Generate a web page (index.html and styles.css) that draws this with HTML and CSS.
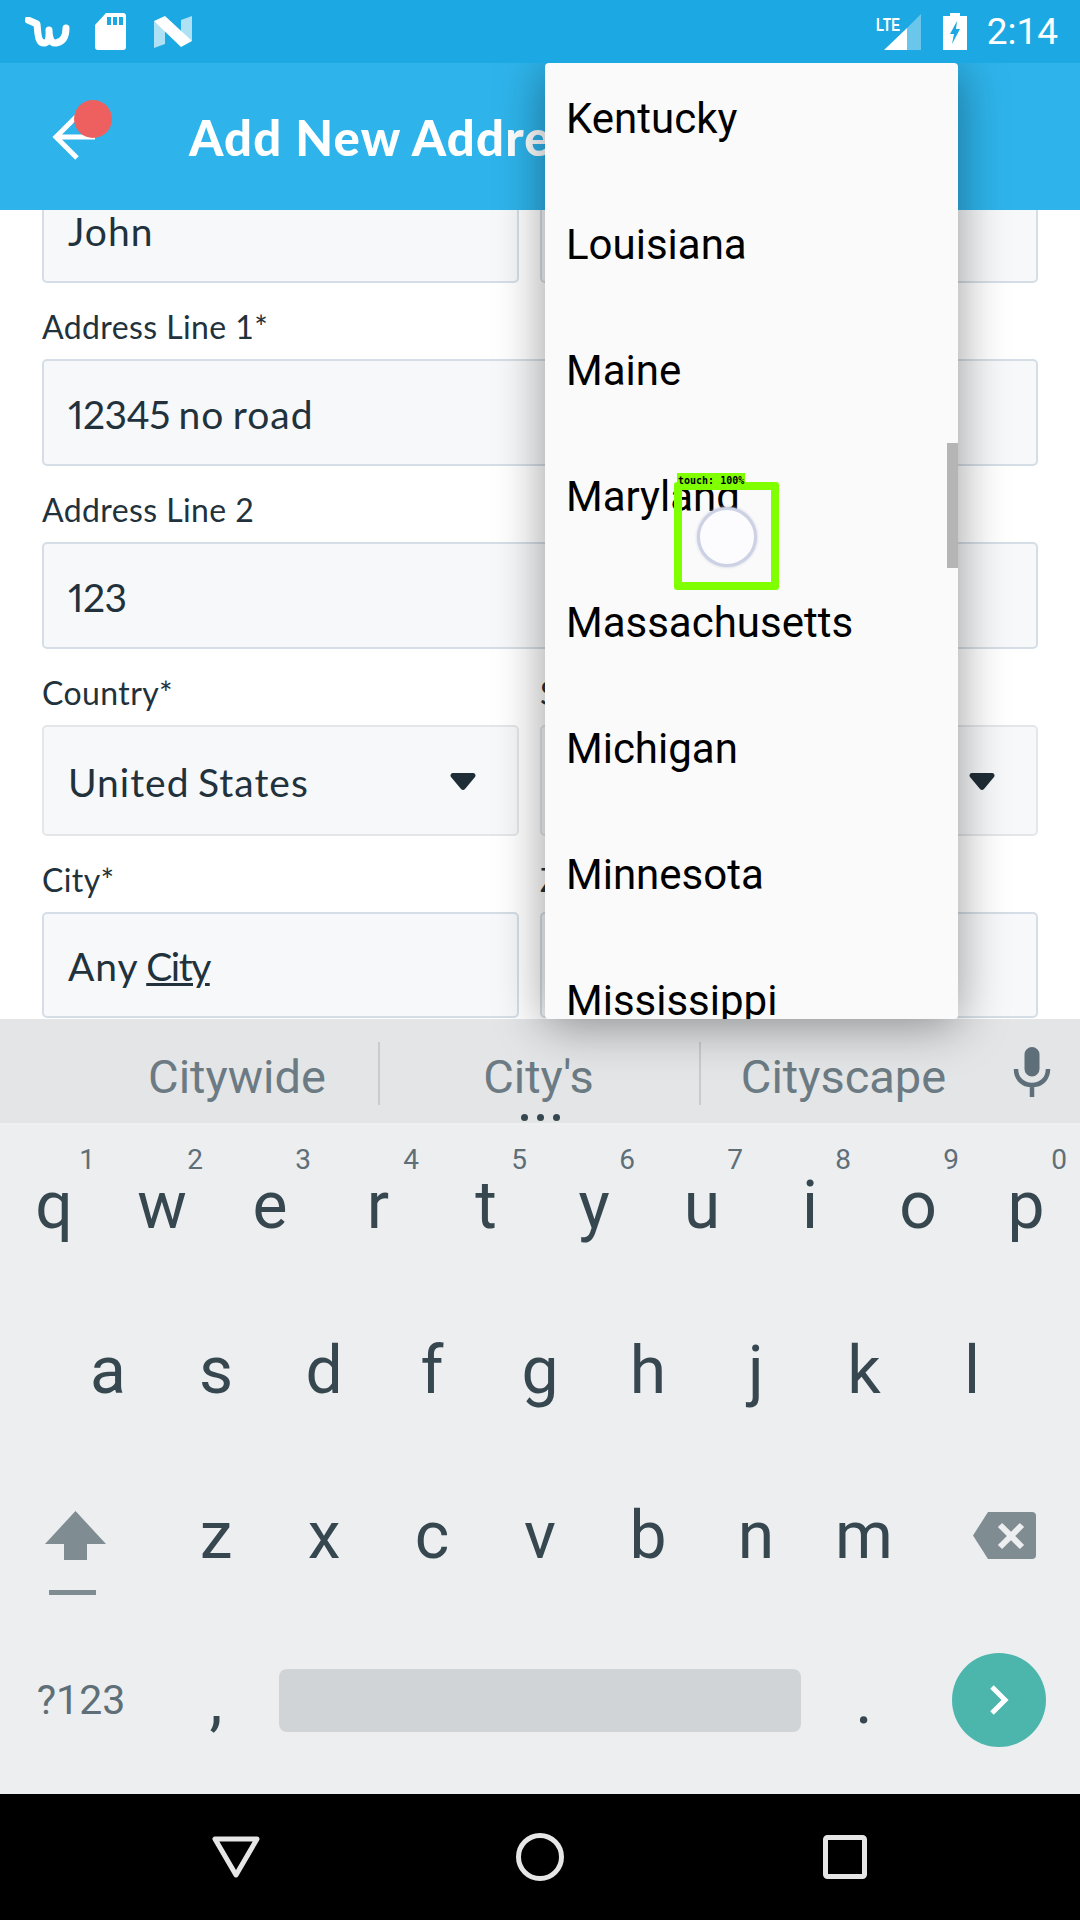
FILE: index.html
```html
<!DOCTYPE html>
<html lang="en">

<head>
    <meta charset="UTF-8">
    <meta name="viewport" content="width=device-width, initial-scale=1.0">
    <title>Add New Address</title>
    <link rel="stylesheet" href="styles.css">
</head>

<body>
    <div class="screen">
        <div class="status-bar">
            <svg class="ic-wish" viewBox="0 0 45 30">
                <path d="M3 3 L12 7 C13 18 13 27 20 26 C25 25 24 16 24 13 C24 18 25 27 31 26 C38 25 41 19 41 11" fill="none" stroke="#fff" stroke-width="7" stroke-linecap="round" stroke-linejoin="round" />
            </svg>
            <svg class="ic-sd" viewBox="0 0 31 37">
                <path d="M11 0 H28 a3 3 0 0 1 3 3 V34 a3 3 0 0 1 -3 3 H3 a3 3 0 0 1 -3 -3 V12 Z" fill="#fff" />
                <path d="M12 4 h4 v8 h-4 z M18 4 h4 v8 h-4 z M24 4 h4 v8 h-4 z" fill="#1ca8e2" />
            </svg>
            <svg class="ic-n" viewBox="0 0 38 32">
                <path d="M0 5 L11 12 V28 L0 32 Z M38 0 V25 L27 20 V4 Z" fill="#fff" opacity="0.65" />
                <path d="M0 5 L11 0 L38 25 L27 31 Z" fill="#fff" />
            </svg>
            <div class="status-right">
                <svg class="ic-signal" viewBox="0 0 45 36">
                    <path d="M45 0 V36 H31 V14 Z" fill="#fff" opacity="0.35" />
                    <path d="M31 14 V36 H8 Z" fill="#fff" />
                    <text x="0" y="17" class="lte" textLength="24" lengthAdjust="spacingAndGlyphs">LTE</text>
                </svg>
                <svg class="ic-battery" viewBox="0 0 24 37">
                    <path d="M7 0 H17 V3 H24 V37 H0 V3 H7 Z" fill="#fff" />
                    <path d="M14 8 L7 21 H11 L9 31 L17 16 H13 Z" fill="#1ca8e2" />
                </svg>
                <span class="clock">2:14</span>
            </div>
        </div>

        <div class="app-bar">
            <svg class="ic-back" viewBox="0 0 45 48">
                <path d="M25 3 L4 24 L25 45 M4 24 H43" fill="none" stroke="#fff" stroke-width="5" />
            </svg>
            <h1 class="title">Add New Address</h1>
        </div>

        <div class="form">
            <div class="form-grid">
                <div class="field">
                    <div class="input"><span>John</span></div>
                </div>
                <div class="field">
                    <div class="input"></div>
                </div>
                <div class="field wide">
                    <div class="label">Address Line 1*</div>
                    <div class="input"><span><span class="digits">12345</span> no road</span></div>
                </div>
                <div class="field wide">
                    <div class="label">Address Line 2</div>
                    <div class="input"><span class="digits">123</span></div>
                </div>
                <div class="field">
                    <div class="label">Country*</div>
                    <div class="input select">
                        <span>United States</span>
                        <svg class="caret" viewBox="0 0 26 17">
                            <path d="M3 0 H23 a2.500 2.500 0 0 1 2 4 L15 16 a3 3 0 0 1 -4 0 L1 4 a2.500 2.500 0 0 1 2 -4 Z" fill="#1f2d36" />
                        </svg>
                    </div>
                </div>
                <div class="field">
                    <div class="label">State*</div>
                    <div class="input select">
                        <svg class="caret" viewBox="0 0 26 17">
                            <path d="M3 0 H23 a2.500 2.500 0 0 1 2 4 L15 16 a3 3 0 0 1 -4 0 L1 4 a2.500 2.500 0 0 1 2 -4 Z" fill="#1f2d36" />
                        </svg>
                    </div>
                </div>
                <div class="field">
                    <div class="label">City*</div>
                    <div class="input short"><span>Any <u class="composing">City</u></span></div>
                </div>
                <div class="field">
                    <div class="label">Zip*</div>
                    <div class="input short"></div>
                </div>
            </div>
        </div>

        <div class="keyboard">
            <div class="suggestions">
                <span class="suggestion">Citywide</span>
                <span class="suggestion divided">City's</span>
                <span class="suggestion divided">Cityscape</span>
                <svg class="ic-mic" viewBox="0 0 38 50">
                    <path d="M19 0 a7.500 7.500 0 0 1 7.500 7.500 V22 a7.500 7.500 0 0 1 -15 0 V7.500 A7.500 7.500 0 0 1 19 0 Z" fill="#5f6f7a" />
                    <path d="M3 22 C3 32 10 38 19 38 C28 38 35 32 35 22 M19 38 V50" fill="none" stroke="#5f6f7a" stroke-width="4.500" />
                </svg>
                <div class="more-dots"><i></i><i></i><i></i></div>
            </div>
            <div class="keys">
                <div class="key-row">
                    <div class="key">q<sup class="hint">1</sup></div>
                    <div class="key">w<sup class="hint">2</sup></div>
                    <div class="key">e<sup class="hint">3</sup></div>
                    <div class="key">r<sup class="hint">4</sup></div>
                    <div class="key">t<sup class="hint">5</sup></div>
                    <div class="key">y<sup class="hint">6</sup></div>
                    <div class="key">u<sup class="hint">7</sup></div>
                    <div class="key">i<sup class="hint">8</sup></div>
                    <div class="key">o<sup class="hint">9</sup></div>
                    <div class="key">p<sup class="hint">0</sup></div>
                </div>
                <div class="key-row">
                    <div class="key">a</div>
                    <div class="key">s</div>
                    <div class="key">d</div>
                    <div class="key">f</div>
                    <div class="key">g</div>
                    <div class="key">h</div>
                    <div class="key">j</div>
                    <div class="key">k</div>
                    <div class="key">l</div>
                </div>
                <div class="key-row">
                    <div class="key side">
                        <svg class="ic-shift" viewBox="0 0 61 84">
                            <path d="M30.500 0 L61 33 H42 V49 H19 V33 H0 Z M4 79 H51 V84 H4 Z" fill="#7f8c92" />
                        </svg>
                    </div>
                    <div class="key">z</div>
                    <div class="key">x</div>
                    <div class="key">c</div>
                    <div class="key">v</div>
                    <div class="key">b</div>
                    <div class="key">n</div>
                    <div class="key">m</div>
                    <div class="key side">
                        <svg class="ic-del" viewBox="0 0 63 47">
                            <path d="M15 0 H59 a4 4 0 0 1 4 4 V43 a4 4 0 0 1 -4 4 H15 L0 23.500 Z" fill="#7f8c92" />
                            <path d="M27 13 L49 35 M49 13 L27 35" stroke="#eceef0" stroke-width="6" />
                        </svg>
                    </div>
                </div>
                <div class="key-row bottom-row">
                    <div class="key side symbols">?123</div>
                    <div class="key punct">,</div>
                    <div class="space-key"><div class="space-bar"></div></div>
                    <div class="key punct">.</div>
                    <div class="key side">
                        <div class="enter">
                            <svg class="ic-next" viewBox="0 0 20 32">
                                <path d="M3 3 L16 16 L3 29" fill="none" stroke="#fff" stroke-width="5" />
                            </svg>
                        </div>
                    </div>
                </div>
            </div>
        </div>

        <div class="nav-bar">
            <svg class="ic-nav-back" viewBox="0 0 48 42">
                <path d="M3 3 H45 L24 39 Z" fill="none" stroke="#e6e6e6" stroke-width="5" stroke-linejoin="round" />
            </svg>
            <svg class="ic-nav-home" viewBox="0 0 48 48">
                <circle cx="24" cy="24" r="21.500" fill="none" stroke="#e6e6e6" stroke-width="5" />
            </svg>
            <svg class="ic-nav-recent" viewBox="0 0 44 44">
                <rect x="2.500" y="2.500" width="39" height="39" rx="2" fill="none" stroke="#e6e6e6" stroke-width="5" />
            </svg>
        </div>

        <div class="back-badge"></div>

        <div class="dropdown">
            <div class="dropdown-list">
                <div class="dropdown-item">Kentucky</div>
                <div class="dropdown-item">Louisiana</div>
                <div class="dropdown-item">Maine</div>
                <div class="dropdown-item">Maryland</div>
                <div class="dropdown-item">Massachusetts</div>
                <div class="dropdown-item">Michigan</div>
                <div class="dropdown-item">Minnesota</div>
                <div class="dropdown-item">Mississippi</div>
            </div>
            <div class="scroll-thumb"></div>
        </div>

        <div class="touch-ring"></div>
        <div class="touch-box"><span class="touch-label">touch: 100%</span></div>
    </div>
</body>

</html>
```

FILE: styles.css
```css
* {
    box-sizing: border-box;
}

body {
    margin: 0;
    background: #fff;
    font-family: Lato, sans-serif;
}

.screen {
    position: relative;
    display: flex;
    flex-direction: column;
    width: 1080px;
    height: 1920px;
    overflow: hidden;
}

/* status bar */
.status-bar {
    position: relative;
    z-index: 3;
    display: flex;
    align-items: center;
    flex: 0 0 63px;
    padding-left: 25px;
    background: #1ca8e2;
}

.ic-wish {
    width: 45px;
    height: 30px;
}

.ic-sd {
    width: 31px;
    height: 37px;
    margin-left: 25px;
}

.ic-n {
    width: 38px;
    height: 32px;
    margin-left: 28px;
}

.status-right {
    display: flex;
    align-items: center;
    margin-left: auto;
    padding-right: 22px;
}

.ic-signal {
    width: 45px;
    height: 36px;
    overflow: visible;
}

.lte {
    fill: #fff;
    font-family: "Liberation Sans", sans-serif;
    font-size: 19px;
    font-weight: 700;
}

.ic-battery {
    width: 24px;
    height: 37px;
    margin-left: 22px;
}

.clock {
    margin-left: 20px;
    color: #fff;
    font-family: Roboto, sans-serif;
    font-size: 37px;
}

/* app bar */
.app-bar {
    position: relative;
    z-index: 1;
    display: flex;
    align-items: center;
    flex: 0 0 147px;
    padding-left: 52px;
    background: #2eb4eb;
}

.ic-back {
    width: 45px;
    height: 48px;
}

.title {
    margin: 0 0 0 92px;
    color: #fff;
    font-size: 49px;
    font-weight: 900;
    letter-spacing: 1.200px;
    white-space: nowrap;
}

.back-badge {
    position: absolute;
    top: 100px;
    left: 74px;
    z-index: 2;
    width: 38px;
    height: 38px;
    border-radius: 50%;
    background: #ee6060;
}

/* form */
.form {
    flex: 1;
    min-height: 0;
    overflow: hidden;
    background: #fff;
}

.form-grid {
    display: grid;
    grid-template-columns: 477px 498px;
    column-gap: 21px;
    margin-top: -34px;
    padding-left: 42px;
}

.wide {
    grid-column: 1 / 3;
}

.label {
    height: 76px;
    padding-top: 24px;
    color: #22323c;
    font-size: 32px;
    letter-spacing: 0.400px;
    line-height: 40px;
}

.input {
    display: flex;
    align-items: center;
    height: 107px;
    padding: 2px 24px 0;
    border: 2px solid #d5dee6;
    border-radius: 5px;
    background: #f6f8fa;
    color: #22323c;
    font-size: 39px;
    letter-spacing: 1px;
    word-spacing: -2.500px;
}

.digits {
    font-variant-numeric: proportional-nums;
    letter-spacing: -0.500px;
}

.composing {
    letter-spacing: -1.500px;
}

.select {
    height: 111px;
    border-color: #e3e7ea;
}

.short {
    height: 106px;
}

.caret {
    width: 26px;
    height: 17px;
    margin: 0 17px 0 auto;
}

/* dropdown */
.dropdown {
    position: absolute;
    top: 63px;
    left: 545px;
    z-index: 2;
    width: 413px;
    height: 956px;
    overflow: hidden;
    border-radius: 4px;
    background: #fafafa;
    box-shadow: 0 6px 50px rgba(0, 0, 0, 0.4);
}

.dropdown-list {
    margin-top: -8px;
}

.dropdown-item {
    display: flex;
    align-items: center;
    height: 126px;
    padding-left: 21px;
    color: #000;
    font-family: Roboto, sans-serif;
    font-size: 42px;
}

.scroll-thumb {
    position: absolute;
    top: 380px;
    right: 0;
    width: 11px;
    height: 125px;
    background: #b5b5b5;
}

/* touch marker */
.touch-ring {
    position: absolute;
    top: 507px;
    left: 697px;
    z-index: 3;
    width: 60px;
    height: 60px;
    border: 3px solid #cdd1e4;
    border-radius: 50%;
    background: #fcfcfe;
    box-shadow: 0 0 3px #c6cbe0;
}

.touch-box {
    position: absolute;
    top: 482px;
    left: 674px;
    z-index: 3;
    width: 105px;
    height: 108px;
    border: 8px solid #7fff00;
    border-radius: 3px;
}

.touch-label {
    position: absolute;
    top: -17px;
    left: -5px;
    padding: 0 1px;
    background: #7fff00;
    color: #000;
    font-family: "DejaVu Sans Mono", monospace;
    font-size: 10px;
    font-weight: 700;
    line-height: 16px;
    white-space: nowrap;
}

/* keyboard */
.keyboard {
    flex: 0 0 775px;
    background: #eceef0;
}

.suggestions {
    position: relative;
    display: flex;
    align-items: center;
    height: 106px;
    border-bottom: 2px solid #eef0f1;
    background: #e3e5e7;
    color: #6c7b83;
    font-family: Roboto, sans-serif;
    font-size: 47px;
}

.suggestion {
    position: relative;
    flex: 0 0 320px;
    margin-top: 10px;
    text-align: center;
}

.suggestion:first-child {
    flex-basis: 378px;
    padding-left: 96px;
}

.divided {
    flex-basis: 321px;
}

.suggestion:last-of-type {
    padding-right: 32px;
}

.divided::before {
    content: "";
    position: absolute;
    top: -7px;
    left: 0;
    width: 2px;
    height: 63px;
    background: #c8ccce;
}

.ic-mic {
    width: 38px;
    height: 50px;
    margin: 2px 0 0 -7px;
}

.more-dots {
    position: absolute;
    bottom: 2px;
    left: 521px;
    display: flex;
    gap: 9px;
}

.more-dots i {
    width: 7px;
    height: 7px;
    border-radius: 50%;
    background: #37474f;
}

.keys {
    padding-top: 7px;
}

.key-row {
    display: flex;
    justify-content: center;
    height: 165px;
}

.key {
    position: relative;
    display: flex;
    align-items: center;
    justify-content: center;
    flex: 0 0 108px;
    padding-bottom: 19px;
    color: #37474f;
    font-family: Roboto, sans-serif;
    font-size: 66px;
}

.hint {
    position: absolute;
    top: 10px;
    right: 13px;
    color: #5f6f78;
    font-size: 28px;
    line-height: 36px;
}

.side {
    flex-basis: 162px;
    padding-bottom: 0;
}

.symbols {
    color: #5f6f78;
    font-size: 41px;
}

.punct {
    padding-bottom: 0;
}

.bottom-row {
    padding-bottom: 19px;
}

.ic-shift {
    width: 61px;
    height: 84px;
    margin: 16px 12px 0 0;
}

.ic-del {
    width: 63px;
    height: 47px;
    margin: 0 0 19px 10px;
}

.space-key {
    display: flex;
    align-items: center;
    flex: 0 0 540px;
    padding: 0 9px;
}

.space-bar {
    width: 100%;
    height: 63px;
    border-radius: 8px;
    background: #d1d4d7;
}

.enter {
    display: flex;
    align-items: center;
    justify-content: center;
    width: 94px;
    height: 94px;
    border-radius: 50%;
    background: #4db6ac;
}

.ic-next {
    width: 20px;
    height: 32px;
}

/* nav bar */
.nav-bar {
    display: flex;
    align-items: center;
    flex: 0 0 126px;
    padding-left: 212px;
    background: #000;
}

.ic-nav-back {
    width: 48px;
    height: 42px;
}

.ic-nav-home {
    width: 48px;
    height: 48px;
    margin-left: 256px;
}

.ic-nav-recent {
    width: 44px;
    height: 44px;
    margin-left: 259px;
}
```
